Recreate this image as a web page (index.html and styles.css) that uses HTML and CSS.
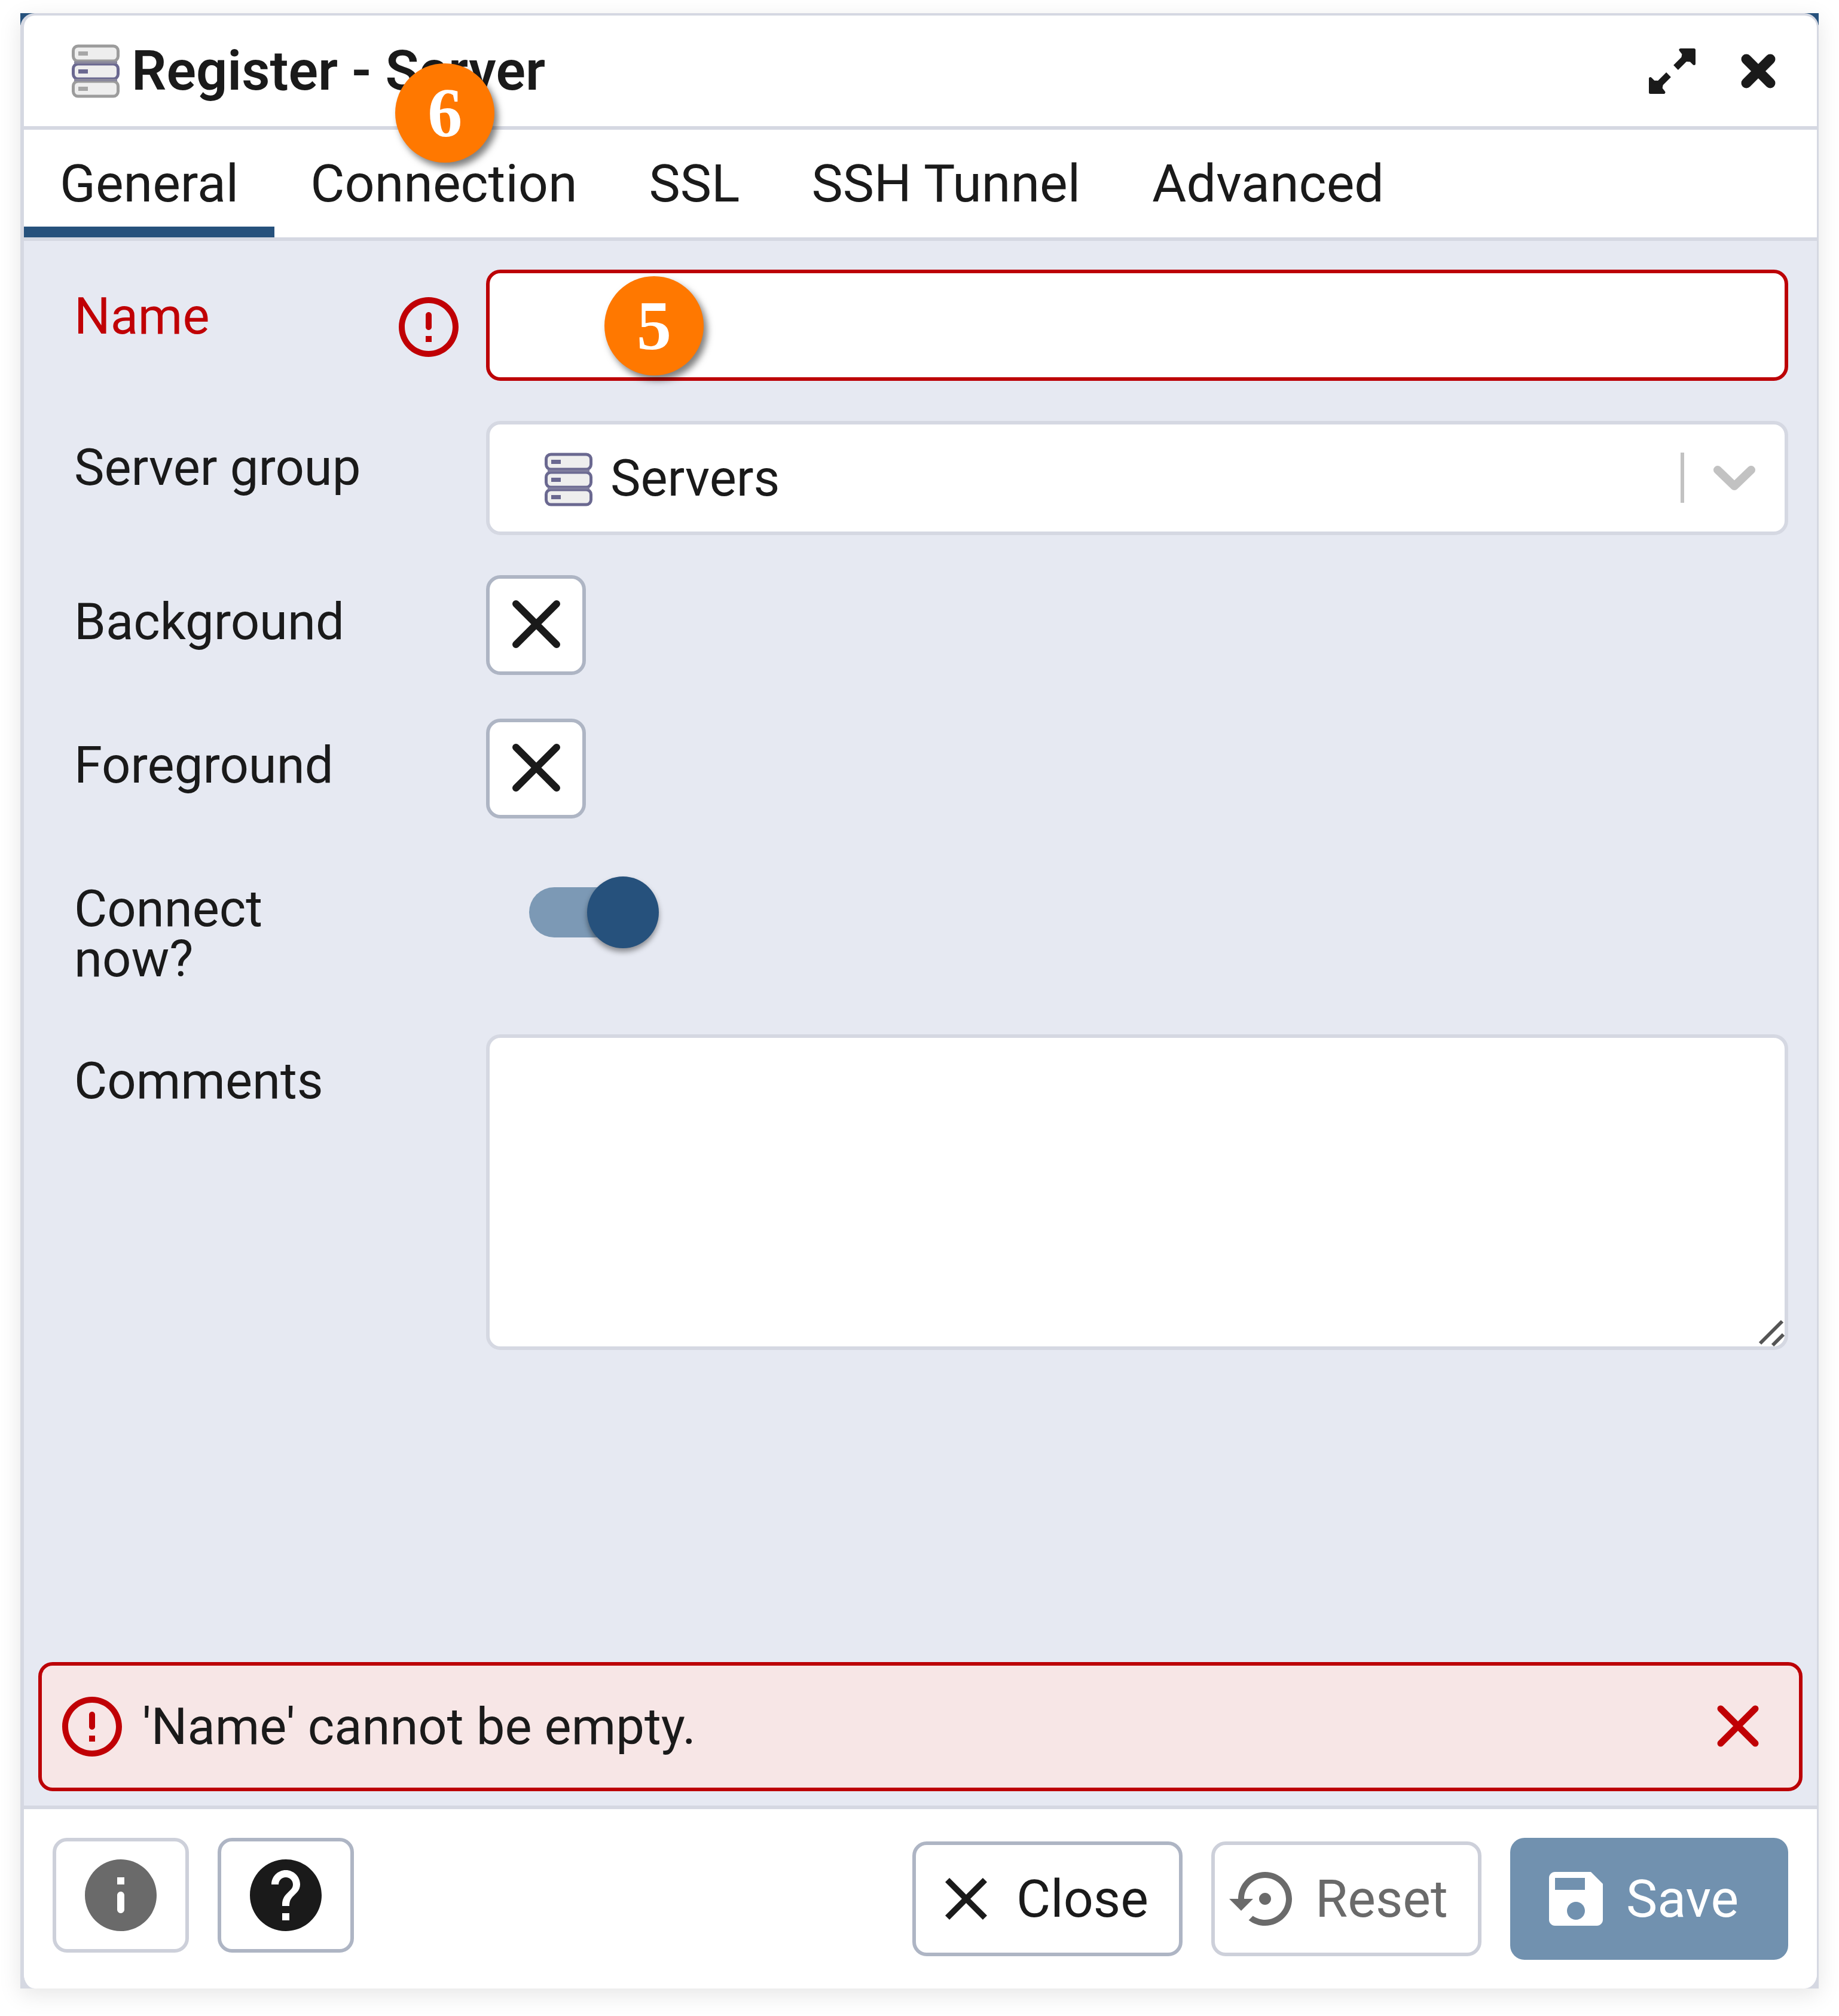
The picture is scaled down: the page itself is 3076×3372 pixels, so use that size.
FILE: index.html
```html
<!DOCTYPE html>
<html lang="en">
<head>
<meta charset="utf-8">
<title>Register - Server</title>
<link rel="stylesheet" href="styles.css">
</head>
<body>
<div class="frame">
  <main class="dialog">
    <header class="titlebar">
      <svg class="server-icon" viewBox="0 0 80 90" aria-hidden="true">
        <g fill="#eeeeee" stroke="#9c9c9c" stroke-width="5">
          <rect x="2.500" y="3" width="75" height="25" rx="8"/>
          <rect x="2.500" y="62" width="75" height="25" rx="8"/>
          <rect x="2.500" y="33" width="75" height="25" rx="8" stroke="#6a6890"/>
        </g>
        <path d="M4 30.500h72M4 60h72" stroke="#8a899c" stroke-width="4"/>
        <path d="M11 15.500h16M11 74.500h16" stroke="#a6a6a6" stroke-width="7"/>
        <path d="M11 45.500h16" stroke="#6a6890" stroke-width="7"/>
      </svg>
      <h1 class="title">Register - Server</h1>
      <button class="title-button" type="button" aria-label="Maximize">
        <svg class="title-icon" viewBox="0 0 96 96" aria-hidden="true">
          <g fill="currentColor" stroke="currentColor" stroke-linejoin="round">
            <path d="M62 12.500h22.500v23L79 30l-8.500-.5L66 25l1-6z" stroke-width="5"/>
            <path d="M34 83.500H11.500v-23L17 66l8.500.5L30 71l-1 6z" stroke-width="5"/>
            <path d="M54 42L76 20M42 54L20 76" stroke-width="11" fill="none"/>
          </g>
        </svg>
      </button>
      <button class="title-button" type="button" aria-label="Close dialog">
        <svg class="title-icon" viewBox="0 0 96 96" aria-hidden="true">
          <path d="M28 28L68 68M68 28L28 68" stroke="currentColor" stroke-width="17" stroke-linecap="round"/>
        </svg>
      </button>
    </header>

    <nav class="tabs" role="tablist">
      <button class="tab tab-active" type="button" role="tab" aria-selected="true">General</button>
      <div class="tab-holder">
        <button class="tab" type="button" role="tab">Connection</button>
        <span class="badge badge-tab">6</span>
      </div>
      <button class="tab" type="button" role="tab">SSL</button>
      <button class="tab" type="button" role="tab">SSH Tunnel</button>
      <button class="tab" type="button" role="tab">Advanced</button>
    </nav>

    <section class="body">
      <form class="form">
        <div class="row">
          <div class="label-cell label-error">
            <label class="label" for="name">Name</label>
            <svg class="icon" viewBox="0 0 24 24" aria-hidden="true"><path fill="currentColor" d="M12 7c.55 0 1 .45 1 1v4c0 .55-.45 1-1 1s-1-.45-1-1V8c0-.55.45-1 1-1zm-.01-5C6.470 2 2 6.480 2 12s4.470 10 9.990 10C17.520 22 22 17.520 22 12S17.520 2 11.990 2zM12 20c-4.420 0-8-3.580-8-8s3.580-8 8-8 8 3.580 8 8-3.580 8-8 8zm1-3h-2v-2h2v2z"/></svg>
          </div>
          <div class="field">
            <input class="input input-error" id="name" type="text">
            <span class="badge badge-field">5</span>
          </div>
        </div>

        <div class="row">
          <div class="label-cell"><label class="label" for="group">Server group</label></div>
          <div class="field">
            <select class="select" id="group"><option>Servers</option></select>
            <svg class="server-icon select-server" viewBox="0 0 80 90" aria-hidden="true">
              <g fill="#eeeeee" stroke="#6a6890" stroke-width="5">
                <rect x="2.500" y="3" width="75" height="25" rx="8"/>
                <rect x="2.500" y="33" width="75" height="25" rx="8"/>
                <rect x="2.500" y="62" width="75" height="25" rx="8"/>
              </g>
              <path d="M5 30.500h70M5 60h70" stroke="#7f7d9e" stroke-width="4"/>
              <path d="M11 15.500h16M11 45.500h16M11 74.500h16" stroke="#6a6890" stroke-width="7"/>
            </svg>
            <svg class="select-arrow" viewBox="0 0 132 84" aria-hidden="true">
              <path d="M3 0v84" stroke="#c2c2c2" stroke-width="6"/>
              <path d="M62 29L90 56L118 29" fill="none" stroke="#c2c2c2" stroke-width="14" stroke-linecap="round" stroke-linejoin="round"/>
            </svg>
          </div>
        </div>

        <div class="row row-color">
          <div class="label-cell"><label class="label" for="bg">Background</label></div>
          <div class="field">
            <button class="swatch" id="bg" type="button" aria-label="Background color">
              <svg class="swatch-icon" viewBox="0 0 84 84" aria-hidden="true"><path d="M8 6L76 74M76 6L8 74" stroke="currentColor" stroke-width="12" stroke-linecap="round"/></svg>
            </button>
          </div>
        </div>

        <div class="row row-color">
          <div class="label-cell"><label class="label" for="fg">Foreground</label></div>
          <div class="field">
            <button class="swatch" id="fg" type="button" aria-label="Foreground color">
              <svg class="swatch-icon" viewBox="0 0 84 84" aria-hidden="true"><path d="M8 6L76 74M76 6L8 74" stroke="currentColor" stroke-width="12" stroke-linecap="round"/></svg>
            </button>
          </div>
        </div>

        <div class="row row-switch">
          <div class="label-cell"><label class="label label-narrow" for="connect">Connect now?</label></div>
          <div class="field">
            <input class="switch" id="connect" type="checkbox" role="switch" checked>
          </div>
        </div>

        <div class="row">
          <div class="label-cell"><label class="label" for="comments">Comments</label></div>
          <div class="field">
            <textarea class="textarea" id="comments"></textarea>
            <svg class="grip" viewBox="0 0 48 48" aria-hidden="true"><path d="M7 43L44 6M28 46L46 28" stroke="#555555" stroke-width="6"/></svg>
          </div>
        </div>
      </form>

      <div class="alert" role="alert">
        <svg class="icon alert-icon" viewBox="0 0 24 24" aria-hidden="true"><path fill="currentColor" d="M12 7c.55 0 1 .45 1 1v4c0 .55-.45 1-1 1s-1-.45-1-1V8c0-.55.45-1 1-1zm-.01-5C6.470 2 2 6.480 2 12s4.470 10 9.990 10C17.520 22 22 17.520 22 12S17.520 2 11.990 2zM12 20c-4.420 0-8-3.580-8-8s3.580-8 8-8 8 3.580 8 8-3.580 8-8 8zm1-3h-2v-2h2v2z"/></svg>
        <span class="alert-text">'Name' cannot be empty.</span>
        <button class="alert-close" type="button" aria-label="Dismiss">
          <svg class="icon" viewBox="0 0 120 120" aria-hidden="true"><path d="M31 30L89 88M89 30L31 88" stroke="currentColor" stroke-width="11" stroke-linecap="round"/></svg>
        </button>
      </div>
    </section>

    <footer class="footer">
      <div class="footer-left">
        <button class="button button-square button-disabled" type="button" aria-label="SQL help" disabled>
          <svg class="icon-large" viewBox="0 0 24 24" aria-hidden="true"><path fill="currentColor" d="M12 2C6.480 2 2 6.480 2 12s4.480 10 10 10 10-4.480 10-10S17.520 2 12 2zm0 15c-.55 0-1-.45-1-1v-4c0-.55.45-1 1-1s1 .45 1 1v4c0 .55-.45 1-1 1zm1-8h-2V7h2v2z"/></svg>
        </button>
        <button class="button button-square" type="button" aria-label="Dialog help">
          <svg class="icon-large" viewBox="0 0 24 24" aria-hidden="true"><path fill="currentColor" d="M12 2C6.480 2 2 6.480 2 12s4.480 10 10 10 10-4.480 10-10S17.520 2 12 2zm1 17h-2v-2h2v2zm2.070-7.750l-.9.92C13.450 12.900 13 13.500 13 15h-2v-.5c0-1.100.45-2.100 1.170-2.830l1.240-1.260c.37-.36.59-.86.59-1.410 0-1.100-.9-2-2-2s-2 .9-2 2H8c0-2.210 1.790-4 4-4s4 1.790 4 4c0 .88-.36 1.680-.93 2.250z"/></svg>
        </button>
      </div>
      <div class="footer-right">
        <button class="button" type="button">
          <svg class="icon" viewBox="0 0 24 24" aria-hidden="true"><path fill="currentColor" d="M19 6.410L17.590 5 12 10.590 6.410 5 5 6.410 10.590 12 5 17.590 6.410 19 12 13.410 17.590 19 19 17.590 13.410 12z"/></svg>
          Close
        </button>
        <button class="button button-disabled" type="button" disabled>
          <svg class="icon" viewBox="0 0 24 24" aria-hidden="true"><path fill="currentColor" d="M14 12c0-1.100-.9-2-2-2s-2 .9-2 2 .9 2 2 2 2-.9 2-2zm-2-9c-4.970 0-9 4.030-9 9H0l4 4 4-4H5c0-3.870 3.130-7 7-7s7 3.130 7 7-3.130 7-7 7c-1.510 0-2.910-.49-4.060-1.300l-1.420 1.440C8.040 20.300 9.940 21 12 21c4.970 0 9-4.030 9-9s-4.030-9-9-9z"/></svg>
          Reset
        </button>
        <button class="button button-primary" type="button" disabled>
          <svg class="icon" viewBox="0 0 24 24" aria-hidden="true"><path fill="currentColor" d="M17 3H5c-1.110 0-2 .9-2 2v14c0 1.100.89 2 2 2h14c1.100 0 2-.9 2-2V7l-4-4zm-5 16c-1.660 0-3-1.340-3-3s1.340-3 3-3 3 1.340 3 3-1.340 3-3 3zm3-10H5V5h10v4z"/></svg>
          Save
        </button>
      </div>
    </footer>
  </main>
</div>
</body>
</html>
```

FILE: styles.css
```css
* {
  box-sizing: border-box;
}

body {
  margin: 0;
  min-height: 100vh;
  padding: 22px 34px 46px;
  display: flex;
  background: #ffffff;
  color: #1a1a1a;
  font-family: Roboto, "Liberation Sans", sans-serif;
  font-size: 85px;
  line-height: 84px;
}

button,
input,
select,
textarea {
  margin: 0;
  padding: 0;
  border: 0;
  background: none;
  color: inherit;
  font: inherit;
}

svg {
  display: block;
  flex: none;
}

/* The frame shows through behind the rounded corners of the dialog. */
.frame {
  flex: 1;
  display: flex;
  background: linear-gradient(#26517c 20px, #d5d8e2 20px);
  box-shadow: 0 10px 36px rgba(0, 0, 0, 0.1);
}

.dialog {
  flex: 1;
  display: flex;
  flex-direction: column;
  border: solid #d5d8e2;
  border-width: 4px 3px 0 6px;
  border-radius: 24px;
  background: #ffffff;
}

/* Title bar */
.titlebar {
  display: flex;
  align-items: center;
  gap: 48px;
  height: 191px;
  padding: 0 50px 0 80px;
  border-bottom: 6px solid #d5d8e2;
}

.server-icon {
  width: 80px;
  height: 90px;
}

.title {
  flex: 1;
  margin: 0 0 0 -28px;
  font-size: 92px;
  font-weight: 600;
}

.title-button,
.title-icon {
  width: 96px;
  height: 96px;
}

/* Tabs */
.tabs {
  display: flex;
  height: 186px;
  border-bottom: 6px solid #d5d8e2;
}

.tab {
  height: 180px;
  padding: 0 60px;
  font-size: 88px;
}

.tab-active {
  box-shadow: inset 0 -18px #26517c;
}

.tab-holder {
  position: relative;
}

.badge {
  position: absolute;
  width: 166px;
  height: 166px;
  border-radius: 50%;
  background: #ff7800;
  box-shadow: 6px 8px 12px rgba(0, 0, 0, 0.5);
  color: #ffffff;
  font-family: "Liberation Serif", serif;
  font-size: 116px;
  font-weight: 700;
  line-height: 166px;
  text-align: center;
}

.badge-tab {
  top: -111px;
  left: 202px;
}

.badge-field {
  top: 11px;
  left: 198px;
}

/* Form */
.body {
  flex: 1;
  display: flex;
  flex-direction: column;
  justify-content: space-between;
  gap: 48px;
  padding: 48px 24px 24px;
  background: #e6e9f2;
}

.form {
  display: flex;
  flex-direction: column;
  gap: 67px;
  padding: 0 24px 0 60px;
}

.row {
  display: grid;
  grid-template-columns: 689px 1fr;
}

.row-color {
  min-height: 173px;
}

.row-switch {
  min-height: 221px;
}

.label-cell {
  display: flex;
  justify-content: space-between;
  align-items: flex-start;
  padding: 36px 36px 0 0;
}

.label-narrow {
  max-width: 360px;
}

.label-error {
  color: #c00005;
}

.field {
  position: relative;
  display: flex;
  align-items: flex-start;
}

.input,
.select,
.textarea {
  width: 100%;
  border: 6px solid #d5d8e2;
  border-radius: 24px;
  background: #ffffff;
}

.input {
  height: 186px;
  padding: 0 48px;
}

.input-error {
  border-color: #bc0006;
}

.select {
  height: 191px;
  padding: 0 202px;
  appearance: none;
}

.select-server {
  position: absolute;
  top: 53px;
  left: 98px;
}

.select-arrow {
  position: absolute;
  top: 53px;
  right: 48px;
  width: 132px;
  height: 84px;
}

.swatch {
  display: grid;
  place-items: center;
  width: 167px;
  height: 167px;
  border: 6px solid #aeb5c4;
  border-radius: 24px;
  background: #ffffff;
}

.swatch-icon {
  width: 84px;
  height: 84px;
}

.switch {
  position: relative;
  width: 204px;
  height: 84px;
  margin: 42px 72px;
  border-radius: 42px;
  background: #7c99b5;
  appearance: none;
}

.switch::after {
  content: "";
  position: absolute;
  top: -18px;
  right: -13px;
  width: 120px;
  height: 120px;
  border-radius: 50%;
  background: #26517c;
  box-shadow: 0 6px 10px rgba(0, 0, 0, 0.4);
}

.textarea {
  display: block;
  height: 528px;
  padding: 36px 48px;
  resize: none;
}

.grip {
  position: absolute;
  right: 6px;
  bottom: 6px;
  width: 48px;
  height: 48px;
}

.icon {
  width: 120px;
  height: 120px;
}

.icon-large {
  width: 144px;
  height: 144px;
}

/* Validation message */
.alert {
  display: flex;
  align-items: center;
  gap: 24px;
  height: 216px;
  padding: 0 42px 0 24px;
  border: 6px solid #bc0006;
  border-radius: 24px;
  background: #f7e6e6;
}

.alert-icon,
.alert-close {
  color: #c00005;
}

.alert-text {
  flex: 1;
}

/* Footer */
.footer {
  display: flex;
  justify-content: space-between;
  padding: 48px;
  border-top: 6px solid #d5d8e2;
  border-radius: 0 0 24px 24px;
  background: #ffffff;
}

.footer-left,
.footer-right {
  display: flex;
  align-items: flex-start;
  gap: 48px;
}

.footer-right {
  align-items: center;
}

.button {
  display: flex;
  align-items: center;
  gap: 24px;
  min-width: 452px;
  height: 192px;
  padding: 0 24px;
  border: 6px solid #aeb5c4;
  border-radius: 24px;
  background: #ffffff;
  font-size: 88px;
}

.button-square {
  justify-content: center;
  min-width: 228px;
}

.button-disabled {
  border-color: #cdd0da;
  color: #6a6a6a;
}

.button-primary {
  min-width: 465px;
  height: 204px;
  padding: 0 50px;
  border: 0;
  background: #7191af;
  color: #ffffff;
}
```
